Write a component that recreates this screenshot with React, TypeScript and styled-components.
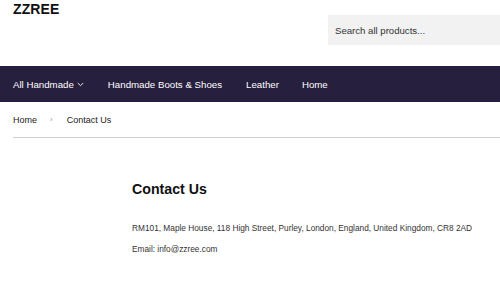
import React from "react";
import styled, { createGlobalStyle } from "styled-components";

const GlobalStyle = createGlobalStyle`
  html, body {
    margin: 0;
    padding: 0;
    background: #ffffff;
    font-family: "Liberation Sans", Arial, sans-serif;
    color: #222;
  }
`;

const Page = styled.div`
  width: 500px;
  height: 286px;
  overflow: hidden;
`;

const Header = styled.header`
  display: flex;
  justify-content: space-between;
  align-items: flex-start;
  height: 66px;
  padding-left: 13px;
  box-sizing: border-box;
`;

const Logo = styled.div`
  font-size: 14px;
  font-weight: bold;
  line-height: 16px;
  margin-top: 1px;
  color: #111;
  letter-spacing: 0.1px;
`;

const Search = styled.div`
  margin-top: 15px;
  width: 172px;
  height: 30px;
  background: #f2f2f2;
  display: flex;
  align-items: center;
  padding-left: 7px;
  box-sizing: border-box;
  font-size: 9.6px;
  color: #333;
`;

const Nav = styled.nav`
  height: 36px;
  background: #271f3e;
  display: flex;
  align-items: center;
  padding-left: 13px;
`;

const NavItem = styled.a<{ $gap: number }>`
  color: #fff;
  font-size: 9.7px;
  text-decoration: none;
  display: flex;
  align-items: center;
  gap: 3px;
  margin-right: ${(p) => p.$gap}px;
`;

const Crumbs = styled.div`
  height: 35px;
  margin-left: 13px;
  border-bottom: 1px solid #cfcfcf;
  display: flex;
  align-items: center;
  font-size: 9px;
  color: #222;
`;

const Sep = styled.span`
  color: #999;
  font-size: 8px;
  margin: 0 14px 0 13px;
`;

const Main = styled.main`
  padding-left: 132px;
  padding-top: 42px;
`;

const Title = styled.h1`
  margin: 0 0 25px;
  font-size: 14.2px;
  line-height: 18px;
  font-weight: bold;
  color: #111;
`;

const Line = styled.p`
  margin: 0 0 10px;
  font-size: 8.3px;
  line-height: 11px;
  color: #333;
`;

const Chevron = () => (
  <svg width="7" height="5" viewBox="0 0 7 5" fill="none">
    <path d="M0.8 1 L3.5 3.7 L6.2 1" stroke="#fff" strokeWidth="0.9" />
  </svg>
);

export default function App() {
  return (
    <Page>
      <GlobalStyle />
      <Header>
        <Logo>ZZREE</Logo>
        <Search>Search all products...</Search>
      </Header>
      <Nav>
        <NavItem $gap={24}>
          All Handmade <Chevron />
        </NavItem>
        <NavItem $gap={24}>Handmade Boots &amp; Shoes</NavItem>
        <NavItem $gap={23}>Leather</NavItem>
        <NavItem $gap={0}>Home</NavItem>
      </Nav>
      <Crumbs>
        <span>Home</span>
        <Sep>›</Sep>
        <span>Contact Us</span>
      </Crumbs>
      <Main>
        <Title>Contact Us</Title>
        <Line>
          RM101, Maple House, 118 High Street, Purley, London, England, United
          Kingdom, CR8 2AD
        </Line>
        <Line>Email: info@zzree.com</Line>
      </Main>
    </Page>
  );
}
